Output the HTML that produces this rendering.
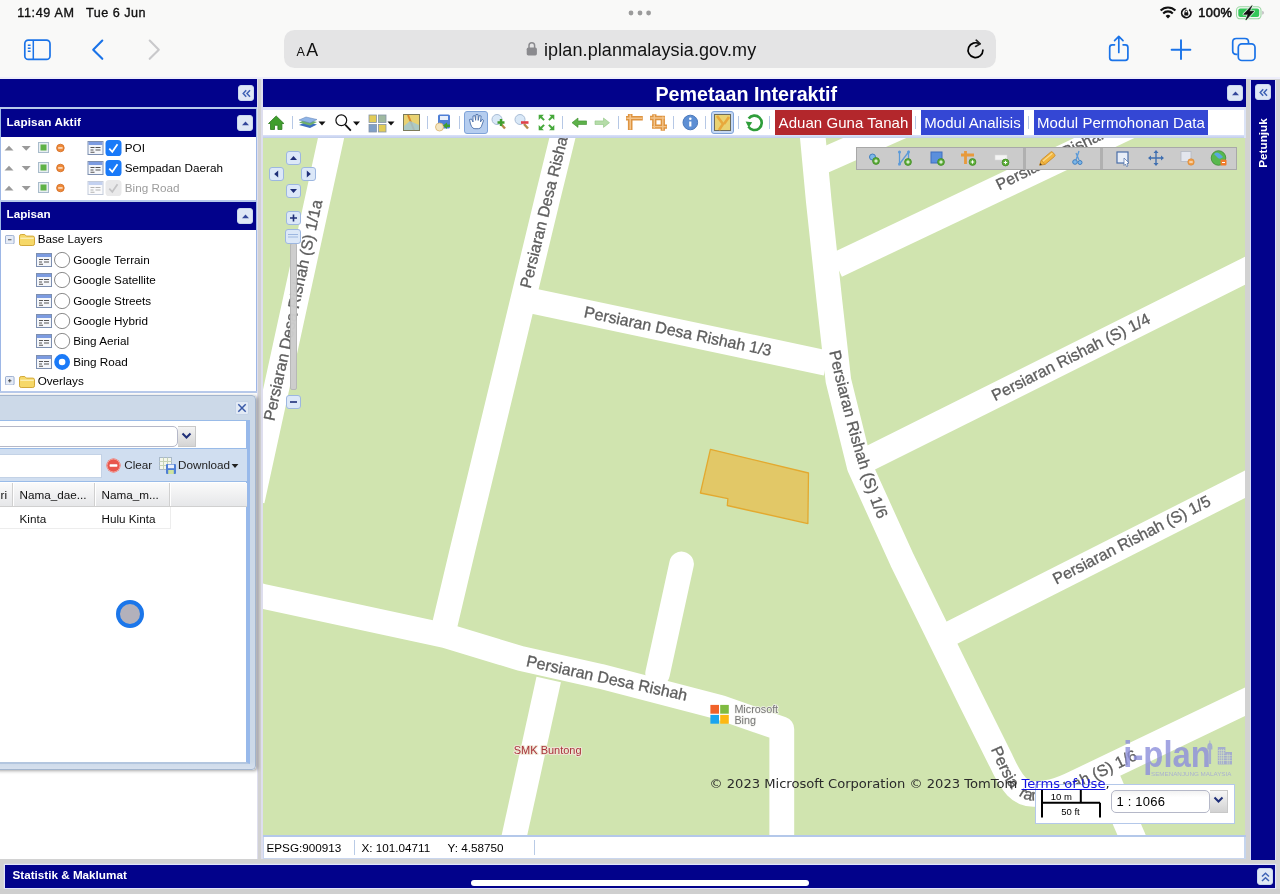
<!DOCTYPE html>
<html lang="ms">
<head>
<meta charset="utf-8">
<title>Pemetaan Interaktif</title>
<style>
*{box-sizing:border-box;margin:0;padding:0}
html,body{width:1280px;height:894px;overflow:hidden}
body{position:relative;background:#d3d3d3;font-family:"Liberation Sans",Arial,sans-serif;font-size:12px;color:#000}
.abs{position:absolute}
/* ---------- iOS chrome ---------- */
#chrome{will-change:transform;position:absolute;left:0;top:0;width:1280px;height:77px;background:#f9f9f8}
#chrome .t{position:absolute;white-space:nowrap;color:#111}
#urlbar{position:absolute;left:284px;top:30px;width:712px;height:37.6px;border-radius:10.5px;background:#e4e4e5}
/* ---------- page ---------- */
#page{will-change:transform;position:absolute;left:0;top:79px;width:1280px;height:815px;background:#d2d2d2;border-top:0}
#pagetop{position:absolute;left:0;top:76.8px;width:1280px;height:2.4px;background:#eeeefb}
.navy{background:#02028b}
.hdr{position:absolute;background:#02028b;color:#fff;font-weight:bold;white-space:nowrap}
.tool{position:absolute;width:16px;height:16px;border-radius:3px;background:#e4ecf8;border:1px solid #c3d3ea}
.row{position:absolute;white-space:nowrap;font-size:11.7px;line-height:16px;color:#000}
.cb{position:absolute;width:16px;height:16px;border-radius:3px;background:#dfe8f6;border:1px solid #c9d7ee;overflow:hidden}
.cb svg{position:absolute;left:0;top:0}
.btn{color:#fff;font-size:15px;line-height:25px;text-align:center;white-space:nowrap;letter-spacing:.05px}
</style>
</head>
<body>
<!-- ======= iOS Safari chrome ======= -->
<div id="chrome">
  <div class="t" style="left:17.3px;top:4px;font-size:12.6px;line-height:18px;letter-spacing:.62px;color:#111;-webkit-text-stroke:.35px #111">11:49 AM</div>
  <div class="t" style="left:86px;top:4px;font-size:12.6px;line-height:18px;letter-spacing:.5px;color:#111;-webkit-text-stroke:.35px #111">Tue 6 Jun</div>
  <svg class="abs" style="left:626px;top:8px" width="28" height="10"><circle cx="5" cy="5" r="2.4" fill="#9b9b9b"/><circle cx="14" cy="5" r="2.4" fill="#9b9b9b"/><circle cx="22.6" cy="5" r="2.4" fill="#9b9b9b"/></svg>
  <div id="urlbar"></div>
  <!-- sidebar icon -->
  <svg class="abs" style="left:20px;top:36px" width="34" height="28" viewBox="0 0 34 28"><rect x="4.8" y="4.2" width="25.2" height="19.2" rx="3.5" fill="none" stroke="#1a73e8" stroke-width="1.7"/><path d="M13.3 4.2v19.2M7.8 9.3h2.8M7.8 12.3h2.8M7.8 15.3h2.8" stroke="#1a73e8" stroke-width="1.5" fill="none"/></svg>
  <!-- back / forward -->
  <svg class="abs" style="left:88px;top:38px" width="20" height="24" viewBox="0 0 20 24"><path d="M14.3 2.6 5.2 11.7l9.1 9.1" fill="none" stroke="#1a73e8" stroke-width="2.1" stroke-linecap="round" stroke-linejoin="round"/></svg>
  <svg class="abs" style="left:144px;top:38px" width="20" height="24" viewBox="0 0 20 24"><path d="M5.7 2.6l9.1 9.1-9.1 9.1" fill="none" stroke="#c9c9cb" stroke-width="2.1" stroke-linecap="round" stroke-linejoin="round"/></svg>
  <!-- lock -->
  <svg class="abs" style="left:525px;top:40px" width="14" height="18" viewBox="0 0 14 18"><rect x="1.7" y="7.6" width="10.2" height="7.8" rx="1.6" fill="#8a8a8e"/><path d="M4 8V5.6a2.8 2.8 0 0 1 5.6 0V8" fill="none" stroke="#8a8a8e" stroke-width="1.5"/></svg>
  <!-- reload -->
  <svg class="abs" style="left:964px;top:38px" width="24" height="24" viewBox="0 0 24 24"><path d="M18.9 12.2a7.4 7.4 0 1 1-3.3-6.2" fill="none" stroke="#000" stroke-width="1.7" stroke-linecap="round"/><path d="M12.2 2.2l4 3.6-4.6 2.6" fill="none" stroke="#222" stroke-width="1.7" stroke-linecap="round" stroke-linejoin="round"/></svg>
  <!-- share -->
  <svg class="abs" style="left:1104px;top:32px" width="30" height="34" viewBox="0 0 30 34"><path d="M10.5 12.8H8.3q-2.6 0-2.6 2.6v10.4q0 2.6 2.6 2.6h13q2.6 0 2.6-2.6V15.4q0-2.6-2.6-2.6h-2.2" fill="none" stroke="#1a73e8" stroke-width="1.7" stroke-linecap="round"/><path d="M14.8 20.5V4.8M10.6 8.6l4.2-4.2 4.2 4.2" fill="none" stroke="#1a73e8" stroke-width="1.7" stroke-linecap="round" stroke-linejoin="round"/></svg>
  <!-- plus -->
  <svg class="abs" style="left:1168px;top:37px" width="26" height="26" viewBox="0 0 26 26"><path d="M3.6 12.7h18.8M13 3.3v18.8" stroke="#1a73e8" stroke-width="1.9" stroke-linecap="round"/></svg>
  <!-- tabs -->
  <svg class="abs" style="left:1228px;top:34px" width="32" height="30" viewBox="0 0 32 30"><rect x="10.3" y="9.8" width="16.7" height="16.7" rx="3.6" fill="#f9f9f8" stroke="#1a73e8" stroke-width="1.7"/><path d="M9.5 20.3H8.3q-3.6 0-3.6-3.6V8.1q0-3.6 3.6-3.6h8.6q3.6 0 3.6 3.6v1" fill="none" stroke="#1a73e8" stroke-width="1.7"/></svg>
  <!-- status right -->
  <svg class="abs" style="left:1158px;top:3px" width="110" height="20" viewBox="1158 3 110 20">
    <path d="M1160.6 10.5a10.5 10.5 0 0 1 14.8 0" fill="none" stroke="#111" stroke-width="2.1"/><path d="M1163.2 13.4a6.8 6.8 0 0 1 9.6 0" fill="none" stroke="#111" stroke-width="2.1"/><path d="M1165.6 16l2.4 2.5 2.4-2.5a3.4 3.4 0 0 0-4.8 0z" fill="#111"/>
    <circle cx="1186.3" cy="13" r="4.6" fill="none" stroke="#111" stroke-width="1.75" stroke-dasharray="25 4" transform="rotate(-50 1186.3 13)"/><rect x="1184.3" y="12.3" width="4" height="3.2" rx=".6" fill="#111"/><path d="M1185.1 12.5v-1a1.2 1.2 0 0 1 2.4 0v1" fill="none" stroke="#111" stroke-width=".9"/>
    <rect x="1236.5" y="6.8" width="24.5" height="12" rx="3.6" fill="none" stroke="#9bd6a2" stroke-width="1.1"/><rect x="1238.3" y="8.6" width="20.9" height="8.4" rx="2" fill="#34c759"/><path d="M1262.3 10.8v4q1.5-.6 1.5-2t-1.5-2z" fill="#b4b4b6"/>
    <path d="M1251.9 5.7l-8.2 8.6h4.4l-2.2 5.6 7.9-8.6h-4.4z" fill="#111" stroke="#ddf3e0" stroke-width="2.2" stroke-linejoin="round"/><path d="M1251.9 5.7l-8.2 8.6h4.4l-2.2 5.6 7.9-8.6h-4.4z" fill="#111" stroke="#111" stroke-width=".7" stroke-linejoin="round"/>
  </svg>
  <div class="t" style="left:1198.3px;top:4px;font-size:12.8px;line-height:18px;letter-spacing:.3px;color:#111;-webkit-text-stroke:.55px #111">100%</div>

  <div class="t" style="left:296.6px;top:41.5px;font-size:12.6px;line-height:20px;color:#111">A</div>
  <div class="t" style="left:306.2px;top:38.7px;font-size:17.8px;line-height:22px;color:#111">A</div>
  <div class="t" style="left:544px;top:38.6px;font-size:18px;line-height:22px;letter-spacing:.1px;color:#111">iplan.planmalaysia.gov.my</div>
</div>

<!-- ======= Web page ======= -->
<div id="pagetop"></div>
<div id="page">

<!-- left panel -->
<div class="abs" style="left:0;top:0;width:257px;height:780px;background:#fff"></div>
<div class="hdr" style="left:0;top:0;width:256.8px;height:28px"></div>
<div class="abs" style="left:256.8px;top:0;width:1.3px;height:780px;background:#dedeee"></div><div class="abs" style="left:261.4px;top:0;width:1.4px;height:780px;background:#dedeee"></div>
<div class="cb" style="left:238px;top:6px"><svg width="15" height="15" viewBox="0 0 15 15"><path d="M7.2 4.2 4.2 7.5l3 3.3M11 4.2 8 7.5l3 3.3" fill="none" stroke="#3f63b5" stroke-width="1.5"/></svg></div>
<div class="abs" style="left:0;top:28px;width:257px;height:2px;background:#b7c9ea"></div>
<div class="hdr" style="left:1px;top:30px;width:255px;height:28px;font-size:11.7px;line-height:26.4px;padding-left:5.5px;letter-spacing:.12px">Lapisan Aktif</div>
<div class="abs" style="left:0;top:30px;width:1px;height:92px;background:#9db7e6"></div>
<div class="abs" style="left:256px;top:30px;width:1px;height:92px;background:#9db7e6"></div>
<div class="cb" style="left:237px;top:36px"><svg width="15" height="15" viewBox="0 0 15 15"><path d="M4 9.3h7L7.5 5.4z" fill="#33479a"/></svg></div>
<svg class="abs" style="left:0;top:59.8px" width="124" height="18" viewBox="0 0 124 18">
<path d="M4.5 11.5h9L9 6.8z" fill="#9a9a9a"/><path d="M21.7 7h9l-4.5 4.7z" fill="#9a9a9a"/>
<rect x="38.5" y="3.5" width="10" height="10" fill="#e8eef2" stroke="#a9bccb"/><rect x="40.5" y="5.5" width="6" height="6" fill="#5fb246"/>
<circle cx="60.4" cy="9" r="3.8" fill="#ee8a3a"/><circle cx="60.4" cy="9" r="3.8" fill="none" stroke="#d2691e" stroke-width=".8"/><rect x="58.2" y="8.2" width="4.4" height="1.5" fill="#fde6d0"/>
<g><rect x="88" y="2.5" width="15" height="13" fill="#f4f6fa" stroke="#7d8fb0"/><rect x="88.5" y="3" width="14" height="3" fill="#7c9be0"/><path d="M90.5 8.5h4M90.5 11h3M90.5 13.2h4M95.5 8.5h5M95.5 11h5" stroke="#555" stroke-width="1.1"/></g>
<rect x="105.5" y="1" width="16" height="16" rx="3.6" fill="#1a7af8"/><path d="M109.3 9.6l3 3.2 5.2-7.6" fill="none" stroke="#fff" stroke-width="1.7"/></svg>
<div class="row" style="left:124.8px;top:61px;color:#000">POI</div>
<svg class="abs" style="left:0;top:80.2px" width="124" height="18" viewBox="0 0 124 18">
<path d="M4.5 11.5h9L9 6.8z" fill="#9a9a9a"/><path d="M21.7 7h9l-4.5 4.7z" fill="#9a9a9a"/>
<rect x="38.5" y="3.5" width="10" height="10" fill="#e8eef2" stroke="#a9bccb"/><rect x="40.5" y="5.5" width="6" height="6" fill="#5fb246"/>
<circle cx="60.4" cy="9" r="3.8" fill="#ee8a3a"/><circle cx="60.4" cy="9" r="3.8" fill="none" stroke="#d2691e" stroke-width=".8"/><rect x="58.2" y="8.2" width="4.4" height="1.5" fill="#fde6d0"/>
<g><rect x="88" y="2.5" width="15" height="13" fill="#f4f6fa" stroke="#7d8fb0"/><rect x="88.5" y="3" width="14" height="3" fill="#7c9be0"/><path d="M90.5 8.5h4M90.5 11h3M90.5 13.2h4M95.5 8.5h5M95.5 11h5" stroke="#555" stroke-width="1.1"/></g>
<rect x="105.5" y="1" width="16" height="16" rx="3.6" fill="#1a7af8"/><path d="M109.3 9.6l3 3.2 5.2-7.6" fill="none" stroke="#fff" stroke-width="1.7"/></svg>
<div class="row" style="left:124.8px;top:81px;color:#000">Sempadan Daerah</div>
<svg class="abs" style="left:0;top:100.4px" width="124" height="18" viewBox="0 0 124 18">
<path d="M4.5 11.5h9L9 6.8z" fill="#9a9a9a"/><path d="M21.7 7h9l-4.5 4.7z" fill="#9a9a9a"/>
<rect x="38.5" y="3.5" width="10" height="10" fill="#e8eef2" stroke="#a9bccb"/><rect x="40.5" y="5.5" width="6" height="6" fill="#5fb246"/>
<circle cx="60.4" cy="9" r="3.8" fill="#ee8a3a"/><circle cx="60.4" cy="9" r="3.8" fill="none" stroke="#d2691e" stroke-width=".8"/><rect x="58.2" y="8.2" width="4.4" height="1.5" fill="#fde6d0"/>
<g style="opacity:.45"><rect x="88" y="2.5" width="15" height="13" fill="#f4f6fa" stroke="#7d8fb0"/><rect x="88.5" y="3" width="14" height="3" fill="#7c9be0"/><path d="M90.5 8.5h4M90.5 11h3M90.5 13.2h4M95.5 8.5h5M95.5 11h5" stroke="#555" stroke-width="1.1"/></g>
<rect x="105.5" y="1" width="16" height="16" rx="3.6" fill="#e9e9ea"/><path d="M109.3 9.6l3 3.2 5.2-7.6" fill="none" stroke="#c3c3c5" stroke-width="1.7"/></svg>
<div class="row" style="left:124.8px;top:101px;color:#9c9c9c">Bing Road</div>

<div class="abs" style="left:0;top:120.5px;width:257px;height:2px;background:#b7c9ea"></div>
<div class="hdr" style="left:1px;top:122.5px;width:255px;height:28px;font-size:11.7px;line-height:24.6px;padding-left:5.5px">Lapisan</div>
<div class="abs" style="left:0;top:123px;width:1px;height:191px;background:#9db7e6"></div>
<div class="abs" style="left:256px;top:123px;width:1px;height:191px;background:#9db7e6"></div>
<div class="cb" style="left:237px;top:128.5px"><svg width="15" height="15" viewBox="0 0 15 15"><path d="M4 9.3h7L7.5 5.4z" fill="#33479a"/></svg></div>
<svg class="abs" style="left:5.3px;top:155.8px" width="9.5" height="9.5" viewBox="0 0 11 11"><rect x=".5" y=".5" width="10" height="10" rx="1.5" fill="#e6ecf7" stroke="#8da2c8"/><path d="M3.5 5.5h4" stroke="#333" stroke-width="1"/></svg><svg class="abs" style="left:18px;top:153px" width="18" height="15" viewBox="0 0 18 15"><path d="M1.5 4.2q0-1.7 1.7-1.7h3.6l1.6 1.6h6.4q1.7 0 1.7 1.7v6q0 1.7-1.7 1.7H3.2q-1.7 0-1.7-1.7z" fill="#f6d868" stroke="#d3a93a"/><path d="M2.3 6.3h13.4" stroke="#fbeeb0" stroke-width="1.4"/></svg><div class="row" style="left:37.7px;top:152.4px">Base Layers</div>
<svg class="abs" style="left:35px;top:172.0px" width="36" height="18" viewBox="0 0 36 18"><rect x="1.5" y="2.5" width="15" height="13" fill="#f4f6fa" stroke="#7d8fb0"/><rect x="2" y="3" width="14" height="3" fill="#7c9be0"/><path d="M4 8.5h4M4 11h3M4 13.2h4M9 8.5h5M9 11h5" stroke="#555" stroke-width="1.1"/><circle cx="27.1" cy="9" r="7.6" fill="#fff" stroke="#8a8a8a" stroke-width="1"/></svg>
<div class="row" style="left:73.2px;top:173px">Google Terrain</div>
<svg class="abs" style="left:35px;top:192.2px" width="36" height="18" viewBox="0 0 36 18"><rect x="1.5" y="2.5" width="15" height="13" fill="#f4f6fa" stroke="#7d8fb0"/><rect x="2" y="3" width="14" height="3" fill="#7c9be0"/><path d="M4 8.5h4M4 11h3M4 13.2h4M9 8.5h5M9 11h5" stroke="#555" stroke-width="1.1"/><circle cx="27.1" cy="9" r="7.6" fill="#fff" stroke="#8a8a8a" stroke-width="1"/></svg>
<div class="row" style="left:73.2px;top:193px">Google Satellite</div>
<svg class="abs" style="left:35px;top:212.6px" width="36" height="18" viewBox="0 0 36 18"><rect x="1.5" y="2.5" width="15" height="13" fill="#f4f6fa" stroke="#7d8fb0"/><rect x="2" y="3" width="14" height="3" fill="#7c9be0"/><path d="M4 8.5h4M4 11h3M4 13.2h4M9 8.5h5M9 11h5" stroke="#555" stroke-width="1.1"/><circle cx="27.1" cy="9" r="7.6" fill="#fff" stroke="#8a8a8a" stroke-width="1"/></svg>
<div class="row" style="left:73.2px;top:214px">Google Streets</div>
<svg class="abs" style="left:35px;top:232.9px" width="36" height="18" viewBox="0 0 36 18"><rect x="1.5" y="2.5" width="15" height="13" fill="#f4f6fa" stroke="#7d8fb0"/><rect x="2" y="3" width="14" height="3" fill="#7c9be0"/><path d="M4 8.5h4M4 11h3M4 13.2h4M9 8.5h5M9 11h5" stroke="#555" stroke-width="1.1"/><circle cx="27.1" cy="9" r="7.6" fill="#fff" stroke="#8a8a8a" stroke-width="1"/></svg>
<div class="row" style="left:73.2px;top:234px">Google Hybrid</div>
<svg class="abs" style="left:35px;top:253.3px" width="36" height="18" viewBox="0 0 36 18"><rect x="1.5" y="2.5" width="15" height="13" fill="#f4f6fa" stroke="#7d8fb0"/><rect x="2" y="3" width="14" height="3" fill="#7c9be0"/><path d="M4 8.5h4M4 11h3M4 13.2h4M9 8.5h5M9 11h5" stroke="#555" stroke-width="1.1"/><circle cx="27.1" cy="9" r="7.6" fill="#fff" stroke="#8a8a8a" stroke-width="1"/></svg>
<div class="row" style="left:73.2px;top:254px">Bing Aerial</div>
<svg class="abs" style="left:35px;top:273.7px" width="36" height="18" viewBox="0 0 36 18"><rect x="1.5" y="2.5" width="15" height="13" fill="#f4f6fa" stroke="#7d8fb0"/><rect x="2" y="3" width="14" height="3" fill="#7c9be0"/><path d="M4 8.5h4M4 11h3M4 13.2h4M9 8.5h5M9 11h5" stroke="#555" stroke-width="1.1"/><circle cx="27.1" cy="9" r="7.4" fill="#fff" stroke="#1a7af8" stroke-width="0"/><circle cx="27.1" cy="9" r="5.6" fill="none" stroke="#1a7af8" stroke-width="4.6"/></svg>
<div class="row" style="left:73.2px;top:275px">Bing Road</div>
<svg class="abs" style="left:5.3px;top:296.8px" width="9.5" height="9.5" viewBox="0 0 11 11"><rect x=".5" y=".5" width="10" height="10" rx="1.5" fill="#e6ecf7" stroke="#8da2c8"/><path d="M3.5 5.5h4" stroke="#333" stroke-width="1"/><path d="M5.5 3.5v4" stroke="#333" stroke-width="1"/></svg><svg class="abs" style="left:18px;top:295px" width="18" height="15" viewBox="0 0 18 15"><path d="M1.5 4.2q0-1.7 1.7-1.7h3.6l1.6 1.6h6.4q1.7 0 1.7 1.7v6q0 1.7-1.7 1.7H3.2q-1.7 0-1.7-1.7z" fill="#f6d868" stroke="#d3a93a"/><path d="M2.3 6.3h13.4" stroke="#fbeeb0" stroke-width="1.4"/></svg><div class="row" style="left:37.7px;top:293.6px">Overlays</div>

<div class="abs" style="left:0;top:312px;width:257px;height:2px;background:#b7c9ea"></div>
<svg class="abs" style="left:262.6px;top:58.5px;background:#d0e4af" width="982.9" height="697.5" viewBox="262.6 137.5 982.9 697.5" font-family="'Liberation Sans',Arial,sans-serif">
<defs><path id="lp6" d="M828.7 351 Q856.3 470.5 877.5 518"/><path id="lp9" d="M984.9 736.5 L998.4 767 C1009 790.5 1020 800 1033 800 S1058 797 1077.4 788 L1180 738"/></defs>
<path d="M334.5 120 L330.1 140 L251.5 500" fill="none" stroke="#fff" stroke-width="25.6" stroke-linecap="butt" stroke-linejoin="round"/>
<path d="M566.3 120 L546.6 200 L479 480 L462 550 L443 630" fill="none" stroke="#fff" stroke-width="25.4" stroke-linecap="butt" stroke-linejoin="round"/>
<path d="M534 300.8 L826 362.6" fill="none" stroke="#fff" stroke-width="25.4" stroke-linecap="butt" stroke-linejoin="round"/>
<path d="M809.5 110 L812.5 138 L818.3 200 L829 300 L838 380 L859.3 466 L901.9 560 L970.6 700 L1000.5 760 C1012 785 1020 793.5 1033 793.5 S1056 792 1075 782.6 L1260 693.8" fill="none" stroke="#fff" stroke-width="25.6" stroke-linecap="butt" stroke-linejoin="round"/>
<path d="M820 161.5 L930 112.8" fill="none" stroke="#fff" stroke-width="25.6" stroke-linecap="butt" stroke-linejoin="round"/>
<path d="M836 264.7 L1150 115.6" fill="none" stroke="#fff" stroke-width="25.8" stroke-linecap="butt" stroke-linejoin="round"/>
<path d="M860 462.4 L1260 262.6" fill="none" stroke="#fff" stroke-width="25" stroke-linecap="butt" stroke-linejoin="round"/>
<path d="M941 637.5 L1260 476" fill="none" stroke="#fff" stroke-width="24.6" stroke-linecap="butt" stroke-linejoin="round"/>
<path d="M1100 762 L1143 862" fill="none" stroke="#fff" stroke-width="26" stroke-linecap="butt" stroke-linejoin="round"/>
<path d="M250 593 L262.4 595.75 L445 635.2 L520 657.8 L600 675.8 L720 707 L781.4 728.4 L781.4 850" fill="none" stroke="#fff" stroke-width="24.8" stroke-linecap="butt" stroke-linejoin="round"/>
<path d="M657.2 673 L681.2 563.4" fill="none" stroke="#fff" stroke-width="24.6" stroke-linecap="round" stroke-linejoin="round"/>
<path d="M548.3 679 L510 853" fill="none" stroke="#fff" stroke-width="25" stroke-linecap="butt" stroke-linejoin="round"/>
<polygon points="710,448.8 808.1,472.5 807.5,523.1 726.9,505 727.5,498.1 700,492.5" fill="#e2c867" stroke="#e3a92f" stroke-width="1.3" stroke-linejoin="round"/>
<g fill="#5e5e5e" stroke="#5e5e5e" stroke-width=".3" font-size="16">
<text transform="translate(273.8,421) rotate(-77.7)">Persiaran Desa Rishah (S) 1/1a</text>
<text transform="translate(530.2,288.6) rotate(-76.2)">Persiaran Desa Rishah</text>
<text transform="translate(582.9,316.6) rotate(11.8)">Persiaran Desa Rishah 1/3</text>
<text><textPath href="#lp6">Persiaran Rishah (S) 1/6</textPath></text>
<text transform="translate(994.6,400.7) rotate(-26.7)">Persiaran Rishah (S) 1/4</text>
<text transform="translate(1055.8,584.3) rotate(-27.2)">Persiaran Rishah (S) 1/5</text>
<text transform="translate(998.8,190) rotate(-26.3)">Persiaran Rishah</text>
<text transform="translate(525,665.6) rotate(12.2)">Persiaran Desa Rishah</text>
<text><textPath href="#lp9" startOffset="13.5">Persia<tspan dx="9">ran Rishah (S) 1/6</tspan></textPath></text>
</g>
<text x="513.4" y="754" font-size="11" fill="#a8323a" stroke="#efe6d6" stroke-width="2.2" paint-order="stroke" stroke-linejoin="round">SMK Buntong</text>
<rect x="710" y="704.4" width="8.6" height="8.8" fill="#f1622a"/><rect x="719.8" y="704.4" width="8.6" height="8.8" fill="#80bb41"/><rect x="710" y="714.4" width="8.6" height="8.8" fill="#1ba4ef"/><rect x="719.8" y="714.4" width="8.6" height="8.8" fill="#fdb813"/>
<g font-size="10.8" fill="#767676" stroke="#f3f3ee" stroke-width="1.4" paint-order="stroke"><text x="734" y="712.8">Microsoft</text><text x="734" y="724">Bing</text></g>
</svg>
<div class="hdr" style="left:262.8px;top:0;width:983.2px;height:28px;font-size:19.7px;line-height:31px"><span class="abs" style="left:392.7px;top:0">Pemetaan Interaktif</span></div>
<div class="cb" style="left:1227px;top:6px"><svg width="15" height="15" viewBox="0 0 15 15"><path d="M4 9.3h7L7.5 5.4z" fill="#33479a"/></svg></div>
<div class="abs" style="left:262.8px;top:28px;width:983.2px;height:30.7px;background:linear-gradient(#e0e4fb 0,#e0e4fb 2.6px,#fff 2.8px,#fff 27.6px,#dde3fa 27.8px,#c3cfec 30.7px);border-right:2px solid #dbe3f6"></div>
<div class="abs" style="left:291.5px;top:36.5px;width:1.3px;height:13.5px;background:#b6c8e5"></div>
<div class="abs" style="left:426.5px;top:36.5px;width:1.3px;height:13.5px;background:#b6c8e5"></div>
<div class="abs" style="left:458.9px;top:36.5px;width:1.3px;height:13.5px;background:#b6c8e5"></div>
<div class="abs" style="left:561.9px;top:36.5px;width:1.3px;height:13.5px;background:#b6c8e5"></div>
<div class="abs" style="left:617.5px;top:36.5px;width:1.3px;height:13.5px;background:#b6c8e5"></div>
<div class="abs" style="left:673px;top:36.5px;width:1.3px;height:13.5px;background:#b6c8e5"></div>
<div class="abs" style="left:704.9px;top:36.5px;width:1.3px;height:13.5px;background:#b6c8e5"></div>
<div class="abs" style="left:737.5px;top:36.5px;width:1.3px;height:13.5px;background:#b6c8e5"></div>
<div class="abs" style="left:769px;top:36.5px;width:1.3px;height:13.5px;background:#b6c8e5"></div>
<div class="abs" style="left:915px;top:36.5px;width:1.3px;height:13.5px;background:#b6c8e5"></div>
<div class="abs" style="left:1028px;top:36.5px;width:1.3px;height:13.5px;background:#b6c8e5"></div>
<div class="abs" style="left:464px;top:32px;width:24px;height:23px;border-radius:3px;background:#b5cdef;border:1px solid #7fa3d9"></div>
<div class="abs" style="left:711px;top:32px;width:23px;height:23px;border-radius:3px;background:#c5d8f3;border:1px solid #7fa3d9"></div>
<svg class="abs" style="left:263px;top:28px" width="520" height="30" viewBox="263 107 520 30"><path d="M268.5 123.5l7.7-7.5 7.7 7.5h-2v6h-4v-4.2h-3.4v4.2h-4v-6z" fill="#3f9e2d" stroke="#2b7a1e" stroke-width=".8"/><path d="M299 125l7-3 11 2.5-7 3.5z" fill="#3d6fc0"/><path d="M299 122.5l7-3 11 2.5-7 3.5z" fill="#6fb06a"/><path d="M299 120l7-3 11 2.5-7 3.5z" fill="#8fb4e6" stroke="#5c7fb5" stroke-width=".5"/><path d="M318.5 121.5h7l-3.5 4z" fill="#111"/><circle cx="341.3" cy="120.3" r="5.4" fill="#fff" stroke="#111" stroke-width="1.2"/><path d="M345.2 124.6l5.6 6" stroke="#111" stroke-width="1.7"/><path d="M353 121.5h7l-3.5 4z" fill="#111"/><rect x="369" y="115" width="7.5" height="7.5" fill="#e2cc57" stroke="#8494a8" stroke-width=".8"/><rect x="378.5" y="115" width="7.5" height="7.5" fill="#9fb9a0" stroke="#8494a8" stroke-width=".8"/><rect x="369" y="124.5" width="7.5" height="7.5" fill="#7f9fc6" stroke="#8494a8" stroke-width=".8"/><rect x="378.5" y="124.5" width="7.5" height="7.5" fill="#e2cc57" stroke="#8494a8" stroke-width=".8"/><path d="M387.5 121.5h7l-3.5 4z" fill="#111"/><rect x="403.5" y="114.5" width="16" height="16" fill="#e9d271" stroke="#7b7b5b" stroke-width="1"/><path d="M408 115l6 15" stroke="#d98a2b" stroke-width="2"/><path d="M404 126l6-5 9 4v5h-15z" fill="#9cc7d9" opacity=".8"/><rect x="438" y="114.5" width="12" height="14" rx="1.5" fill="#4f7fd6"/><rect x="440" y="116" width="8" height="4" fill="#e8effb"/><circle cx="439.5" cy="127" r="4" fill="#f3e5c2" stroke="#d9b36a" stroke-width=".8"/><path d="M443 125.5l4-3v2h3v2.4h-3v2z" fill="#3f9e2d"/><path d="M470.5 124l-1-4.5 2-.5 1.5 3V116l2-.3.6 4.6.4-5.8 2 .1.2 5.8 1-4.8 1.9.4-.6 6 1.5-2.6 1.6 1-2.3 6.3q-.8 2-3 2h-3.4q-2.2 0-3.2-2z" fill="#fff" stroke="#4a6ea8" stroke-width=".9" stroke-linejoin="round"/><circle cx="497" cy="119.5" r="5" fill="#d9e8f7" stroke="#a9bdd6" stroke-width="1"/><path d="M501 124l4 4.5" stroke="#b58a4a" stroke-width="2.4"/><path d="M497.5 122.5h7M501 119v7" stroke="#3f9e2d" stroke-width="2.4"/><circle cx="520" cy="119.5" r="5" fill="#d9e8f7" stroke="#a9bdd6" stroke-width="1"/><path d="M524 124l4 4.5" stroke="#b58a4a" stroke-width="2.4"/><path d="M521 122.5h7.5" stroke="#e0414a" stroke-width="2.6"/><path d="M538.7 114.7L543.9 114.7L538.7 119.9z" fill="#45a83a"/><path d="M540.2 116.2L544.1 120.1" stroke="#45a83a" stroke-width="2"/><path d="M554.3 114.7L549.1 114.7L554.3 119.9z" fill="#45a83a"/><path d="M552.8 116.2L548.9 120.1" stroke="#45a83a" stroke-width="2"/><path d="M538.7 130.3L543.9 130.3L538.7 125.1z" fill="#45a83a"/><path d="M540.2 128.8L544.1 124.9" stroke="#45a83a" stroke-width="2"/><path d="M554.3 130.3L549.1 130.3L554.3 125.1z" fill="#45a83a"/><path d="M552.8 128.8L548.9 124.9" stroke="#45a83a" stroke-width="2"/><path d="M572 122.7l6-4.7v2.9h8.5v3.6h-8.5v2.9z" fill="#5db14a" stroke="#3c8f2e" stroke-width=".6"/><path d="M609.5 122.7l-6-4.7v2.9h-8.5v3.6h8.5v2.9z" fill="#b5dca8" stroke="#8fc583" stroke-width=".6"/><path d="M626 118.2h16.8M630.2 114v16" stroke="#de9440" stroke-width="4.6" fill="none"/><path d="M626.5 118.2h15.8M630.2 114.5v15" stroke="#f3c48a" stroke-width="1.6" fill="none"/><path d="M650 118h14.8M654.3 114.3v14.3M662.8 116v14.8M652 126.6h15" stroke="#de9440" stroke-width="4.3" fill="none"/><path d="M650.5 118h14M654.3 114.8v13.3M662.8 116.5v13.8M652.5 126.6h14" stroke="#f3c48a" stroke-width="1.4" fill="none"/><circle cx="690.3" cy="122.5" r="7.3" fill="#5d8fd4" stroke="#4a78ba" stroke-width="1"/><path d="M690.3 121.5v5" stroke="#fff" stroke-width="2.2"/><circle cx="690.3" cy="118.8" r="1.3" fill="#fff"/><rect x="714.5" y="114.5" width="16" height="16" fill="#e9d271" stroke="#6b6b5b" stroke-width="1"/><path d="M717 116l6 8-4 6" stroke="#e8a83c" stroke-width="2.6" fill="none"/><path d="M729 117l-5 7" stroke="#e8a83c" stroke-width="2.6"/><path d="M748.4 126.6a7.2 7.2 0 1 0 .3-8" fill="none" stroke="#2f9e3a" stroke-width="2.6"/><path d="M745.6 121.6l6.6.6-3.5 5.4z" fill="#2f9e3a"/></svg>
<div class="abs btn" style="left:775px;top:31px;width:137px;height:25px;background:#b3272c">Aduan Guna Tanah</div>
<div class="abs btn" style="left:921px;top:31px;width:103px;height:25px;background:#3447d4">Modul Analisis</div>
<div class="abs btn" style="left:1034px;top:31px;width:174px;height:25px;background:#3447d4">Modul Permohonan Data</div>
<svg class="abs" style="left:286px;top:72px" width="15" height="14" viewBox="0 0 15 14"><rect x=".5" y=".5" width="14" height="13" rx="2.5" fill="#dce8f8" stroke="#9db7e0"/><path d="M4 9h7L7.5 5z" fill="#1f2f78"/></svg>
<svg class="abs" style="left:269px;top:87.5px" width="15" height="14" viewBox="0 0 15 14"><rect x=".5" y=".5" width="14" height="13" rx="2.5" fill="#dce8f8" stroke="#9db7e0"/><path d="M9.2 3.5v7L5.2 7z" fill="#1f2f78"/></svg>
<svg class="abs" style="left:301px;top:87.5px" width="15" height="14" viewBox="0 0 15 14"><rect x=".5" y=".5" width="14" height="13" rx="2.5" fill="#dce8f8" stroke="#9db7e0"/><path d="M5.8 3.5v7l4-3.5z" fill="#1f2f78"/></svg>
<svg class="abs" style="left:286px;top:104.5px" width="15" height="14" viewBox="0 0 15 14"><rect x=".5" y=".5" width="14" height="13" rx="2.5" fill="#dce8f8" stroke="#9db7e0"/><path d="M4 5h7L7.5 9z" fill="#1f2f78"/></svg>
<svg class="abs" style="left:286px;top:132px" width="15" height="14" viewBox="0 0 15 14"><rect x=".5" y=".5" width="14" height="13" rx="2.5" fill="#dce8f8" stroke="#9db7e0"/><path d="M4 7h7M7.5 3.5v7" stroke="#1f2f78" stroke-width="1.6"/></svg>
<div class="abs" style="left:289.6px;top:164px;width:7px;height:147px;background:#cdcdcd;border:1px solid #b7b7b7;border-radius:2px;opacity:.97"></div>
<svg class="abs" style="left:285px;top:150px" width="16" height="15" viewBox="0 0 16 15"><rect x=".5" y=".5" width="15" height="14" rx="2.5" fill="#dce8f8" stroke="#9db7e0"/><path d="M3 5.5h10M3 8h10" stroke="#9db7e0" stroke-width="1.2"/></svg>
<svg class="abs" style="left:286px;top:315.5px" width="15" height="14" viewBox="0 0 15 14"><rect x=".5" y=".5" width="14" height="13" rx="2.5" fill="#dce8f8" stroke="#9db7e0"/><path d="M4 7h7" stroke="#1f2f78" stroke-width="1.6"/></svg>
<div class="abs" style="left:855.5px;top:68px;width:381px;height:23px;background:#cbcbcb;border:1px solid #a8a8a8"></div>
<div class="abs" style="left:1023px;top:69px;width:3px;height:21px;background:#b0b0b0"></div><div class="abs" style="left:1100px;top:69px;width:3px;height:21px;background:#b0b0b0"></div>
<svg class="abs" style="left:856px;top:68px" width="381" height="23" viewBox="856 147 381 23"><circle cx="872.5" cy="157" r="3" fill="#7db7e8" stroke="#3f7fc0" stroke-width="1"/><circle cx="876" cy="161" r="3.4" fill="#5fae3a" stroke="#3d8a22" stroke-width=".8"/><path d="M874.3 161h3.4M876 159.3v3.4" stroke="#fff" stroke-width="1"/><path d="M899.5 152v12l9-12v12" fill="none" stroke="#5b9ad8" stroke-width="1.3"/><circle cx="899.5" cy="152" r="1.5" fill="#5b9ad8"/><circle cx="908.5" cy="152" r="1.5" fill="#5b9ad8"/><circle cx="899.5" cy="164" r="1.5" fill="#5b9ad8"/><circle cx="908" cy="162" r="3.4" fill="#5fae3a" stroke="#3d8a22" stroke-width=".8"/><path d="M906.3 162h3.4M908 160.3v3.4" stroke="#fff" stroke-width="1"/><rect x="931" y="152" width="11" height="11" fill="#5b8fdc" stroke="#3f6fc0" stroke-width="1"/><circle cx="941" cy="162" r="3.4" fill="#5fae3a" stroke="#3d8a22" stroke-width=".8"/><path d="M939.3 162h3.4M941 160.3v3.4" stroke="#fff" stroke-width="1"/><path d="M961 155h13M965.5 151v13" stroke="#e89a3c" stroke-width="2.8"/><circle cx="972.5" cy="162" r="3.4" fill="#5fae3a" stroke="#3d8a22" stroke-width=".8"/><path d="M970.8 162h3.4M972.5 160.3v3.4" stroke="#fff" stroke-width="1"/><rect x="995" y="155" width="12" height="5" fill="#f4f4f4" stroke="#d9d9d9" stroke-width=".6"/><circle cx="1005.5" cy="162.5" r="3.4" fill="#5fae3a" stroke="#3d8a22" stroke-width=".8"/><path d="M1003.8 162.5h3.4M1005.5 160.8v3.4" stroke="#fff" stroke-width="1"/><g transform="translate(1039.6,165.2) rotate(-40)"><path d="M0 0l4.6-2.9h12.4q1.4 0 1.4 1.4v3q0 1.4-1.4 1.4H4.6z" fill="#f2b63f" stroke="#c98a2a" stroke-width=".8"/><path d="M4.6-2.9v5.8" stroke="#c98a2a" stroke-width=".6"/><path d="M0 0l2-1.3v2.6z" fill="#4a3a2a"/><path d="M5 -.9h12.5" stroke="#f9dc8f" stroke-width="1.2"/></g><path d="M1079 151l-3 9M1076 153l3 7" stroke="#5b9ad8" stroke-width="1.3"/><circle cx="1075" cy="162" r="2.3" fill="#7db7e8" stroke="#3f7fc0"/><circle cx="1080" cy="162.5" r="2" fill="#7db7e8" stroke="#3f7fc0"/><rect x="1117" y="152" width="11" height="11" fill="#e8eef8" stroke="#4a6ea8" stroke-width="1.2"/><path d="M1124 158l5 5-2 .5 1 2.5-1.5.5-1-2.5-1.5 1.5z" fill="#fff" stroke="#4a6ea8" stroke-width=".7"/><path d="M1149.5 158h13M1156 151.5v13" stroke="#3f6fb0" stroke-width="1.4"/><path d="M1156 150l2.5 3h-5zM1156 166l2.5-3h-5zM1148 158l3-2.5v5zM1164 158l-3-2.5v5z" fill="#3f6fb0"/><rect x="1181" y="151.5" width="10" height="10" fill="#e3e6ee" stroke="#b4b8c4" stroke-width=".8"/><circle cx="1191" cy="162" r="3.2" fill="#f0a04a" stroke="#d9822a" stroke-width=".6"/><path d="M1189.3 162h3.4" stroke="#fff" stroke-width="1"/><circle cx="1218.5" cy="158" r="7.3" fill="#58b84e" stroke="#3d8a32" stroke-width=".8"/><path d="M1214 154q3-3 6 0t3 3q-3 3-5 1t-4-4z" fill="#5aa6e0"/><rect x="1220.5" y="159.5" width="6" height="6" rx="1" fill="#f07a2a"/><path d="M1222 162.5h3" stroke="#fff" stroke-width="1"/></svg>
<svg class="abs" style="left:1118px;top:655px" width="120" height="46" viewBox="1118 734 120 46" font-family="'Liberation Sans',Arial,sans-serif" opacity=".8">
<text x="1123.3" y="767.2" font-size="37" font-weight="bold" fill="#8d8fdc" textLength="87.5" lengthAdjust="spacingAndGlyphs">i-plan</text>
<g fill="#9aa0d6"><path d="M1208.6 764v-14.5h-1.3v-3.2q0-3 2.1-3.6v-2.3h.9v2.3q2.1.6 2.1 3.6v3.2h-1.3v14.5z"/><path d="M1217.8 764.5v-17.5h7.6v5h6.6v12.5z"/></g>
<path d="M1219.7 749v15M1221.6 749v15M1223.5 749v15M1227.3 753.5v11M1229.2 753.5v11M1217.8 750.5h7.6M1217.8 753h7.6M1217.8 755.5h14M1217.8 758h14M1217.8 760.5h14" stroke="#d7e4c4" stroke-width=".6" fill="none"/>
<text x="1151" y="775.6" font-size="6.2" fill="#a0a5d8" textLength="80.4" lengthAdjust="spacingAndGlyphs">SEMENANJUNG MALAYSIA</text>
</svg>
<div class="abs" style="left:1034.5px;top:705px;width:200.5px;height:39.5px;background:#fff;border:1px solid #b4c8ea"></div>
<svg class="abs" style="left:1036px;top:708px" width="72" height="34" viewBox="1036 787 72 34" font-family="'Liberation Sans',Arial,sans-serif">
<path d="M1042 790v27.5M1042 802.8h58M1080.8 790v12.8M1100 802.8v14.7" fill="none" stroke="#000" stroke-width="2"/>
<text x="1061.3" y="800" font-size="9.5" text-anchor="middle">10 m</text><text x="1070.5" y="814.8" font-size="9.5" text-anchor="middle">50 ft</text></svg>
<div class="abs" style="left:1111px;top:711px;width:99px;height:23px;background:linear-gradient(#f2f2f2,#fff 30%);border:1px solid #b5b8c8;border-radius:5px;font-size:13px;line-height:21px;padding-left:4.5px;letter-spacing:.2px">1 : 1066</div>
<div class="abs" style="left:1210px;top:711px;width:18px;height:23px;background:linear-gradient(#f6f6f6,#d2d2d2);border:1px solid #c8c8c8;border-left:0"></div>
<svg class="abs" style="left:1212px;top:716px" width="13" height="10" viewBox="0 0 13 10"><path d="M2.5 2.5l4 4 4-4" fill="none" stroke="#1f2f78" stroke-width="2"/></svg>
<div class="abs" style="left:262.8px;top:756px;width:983.2px;height:2px;background:#b4c8ea"></div>
<div class="abs" style="left:262.8px;top:758px;width:983.2px;height:22px;background:#fff;border-right:2px solid #c5d5ee;border-bottom:1.5px solid #c9d6ee;border-left:1px solid #c9d6ee"></div>
<div class="row" style="left:266.5px;top:761px;font-size:11.7px">EPSG:900913</div><div class="row" style="left:361.5px;top:761px;font-size:11.7px">X: 101.04711</div><div class="row" style="left:447.5px;top:761px;font-size:11.7px">Y: 4.58750</div>
<div class="abs" style="left:534px;top:761px;width:1px;height:15px;background:#b9cbe6"></div><div class="abs" style="left:354px;top:761px;width:1px;height:15px;background:#b9cbe6"></div>
<div class="abs navy" style="left:1250px;top:0.5px;width:25.6px;height:780px;border-left:1px solid #d4d9fb;border-right:1px solid #e2e5fd"></div>
<div class="abs" style="left:1275.6px;top:0;width:5px;height:815px;background:#d5d5d5"></div>
<div class="cb" style="left:1254.5px;top:5px"><svg width="15" height="15" viewBox="0 0 15 15"><path d="M7.2 4.2 4.2 7.5l3 3.3M11 4.2 8 7.5l3 3.3" fill="none" stroke="#3f63b5" stroke-width="1.5"/></svg></div>
<div class="abs" style="left:1212.5px;top:56px;width:100px;height:16px;line-height:16px;text-align:center;transform:rotate(-90deg);color:#fff;font-weight:bold;font-size:11.7px">Petunjuk</div>
<div class="hdr" style="left:5.2px;top:786.1px;width:1269.6px;height:22.9px;box-shadow:0 0 0 1.2px #e1e3fb;font-size:11.7px;line-height:19.6px;padding-left:7.3px">Statistik &amp; Maklumat</div>
<div class="cb" style="left:1256.5px;top:788.5px;height:17px"><svg width="15" height="16" viewBox="0 0 15 16"><path d="M4 7.5 7.5 4.3 11 7.5M4 12 7.5 8.8 11 12" fill="none" stroke="#3f63b5" stroke-width="1.5"/></svg></div>
<div class="abs" style="left:0;top:810px;width:1280px;height:5px;background:#cfcfcf"></div>
<div class="abs" style="left:471px;top:801px;width:337.5px;height:5.5px;border-radius:3px;background:#fff"></div>

<div class="abs" style="left:709.5px;top:695.6px;font-family:'DejaVu Sans',Verdana,sans-serif;font-size:13.1px;line-height:17px;white-space:nowrap;color:#2b2b2b">© 2023 Microsoft Corporation © 2023 TomTom <span style="color:#1414e0;text-decoration:underline">Terms of Use</span>,</div>
<!-- floating result window (page coords: top = y-79) -->
<div class="abs" style="left:-4px;top:315.8px;width:259.8px;height:375.2px;background:linear-gradient(#ccd9e8 98%,#d6e0ee);border:1px solid #a3b5cd;border-radius:0 4px 4px 0;box-shadow:1.5px 1px 3.5px rgba(0,0,0,.35)"></div>
<div class="abs" style="left:235px;top:322px;width:14px;height:14px;border-radius:2px;background:#e2eaf5;border:1px solid #c5d3e6"></div>
<svg class="abs" style="left:235px;top:322px" width="14" height="14" viewBox="0 0 14 14"><path d="M3.3 3.3l7.4 7.4M10.7 3.3l-7.4 7.4" stroke="#3a5aa8" stroke-width="1.5"/></svg>
<div class="abs" style="left:-2px;top:341px;width:251.8px;height:343.5px;background:#fff;border:1px solid #99bbe8;border-right:4px solid #98b9ea;border-bottom:2px solid #b3c6df"></div>
<!-- combo -->
<div class="abs" style="left:-6px;top:347px;width:184px;height:21px;background:#fff;border:1px solid #b5b8c8;border-radius:5px"></div>
<div class="abs" style="left:178px;top:347px;width:18px;height:21px;background:linear-gradient(#f4f4f4,#d4d4d4);border:1px solid #c8c8c8;border-left:0"></div>
<svg class="abs" style="left:180px;top:352px" width="13" height="10" viewBox="0 0 13 10"><path d="M2.5 2.5l4 4 4-4" fill="none" stroke="#1f2f78" stroke-width="2"/></svg>
<!-- toolbar -->
<div class="abs" style="left:-1px;top:369px;width:248px;height:1px;background:#99bbe8"></div>
<div class="abs" style="left:-1px;top:370px;width:248px;height:33px;background:#d0def0"></div>
<div class="abs" style="left:-1px;top:402px;width:248px;height:1px;background:#99bbe8"></div>
<div class="abs" style="left:-4px;top:375px;width:106px;height:24px;background:#fff;border:1px solid #c3d2e6"></div>
<svg class="abs" style="left:105px;top:378px" width="17" height="17" viewBox="0 0 17 17"><circle cx="8.5" cy="8.5" r="7" fill="#e8564d"/><circle cx="8.5" cy="8.5" r="6.5" fill="none" stroke="#f3a39d" stroke-width="1"/><rect x="4.6" y="7.3" width="7.8" height="2.4" rx=".6" fill="#fff"/></svg>
<div class="row" style="left:124.2px;top:378px;color:#222">Clear</div>
<svg class="abs" style="left:158px;top:377px" width="19" height="19" viewBox="0 0 19 19"><rect x="1.5" y="1.5" width="12" height="12" fill="#f3f6ec" stroke="#a9b9c9"/><path d="M1.5 5.5h12M5.5 1.5v12M9.5 1.5v12M1.5 9.5h12" stroke="#c5d3b5" stroke-width="1"/><rect x="8" y="8" width="10" height="10" rx="1" fill="#4f7fd6"/><rect x="10" y="8.6" width="6" height="3.6" fill="#e9f0fb"/><rect x="10.2" y="14" width="5.6" height="4" fill="#cfe3a0"/></svg>
<div class="row" style="left:178px;top:378px;color:#222">Download</div>
<svg class="abs" style="left:231px;top:384px" width="8" height="6" viewBox="0 0 8 6"><path d="M.6 1h6.8L4 5z" fill="#222"/></svg>
<!-- grid -->
<div class="abs" style="left:-1px;top:404px;width:248px;height:24px;background:linear-gradient(#fafafa,#e6e7e9);border-bottom:1px solid #d0d0d0"></div>
<div class="abs" style="left:12px;top:404px;width:1px;height:23px;background:#d0d0d0"></div>
<div class="abs" style="left:13px;top:404px;width:1px;height:23px;background:#fff"></div>
<div class="abs" style="left:94px;top:404px;width:1px;height:23px;background:#d0d0d0"></div>
<div class="abs" style="left:95px;top:404px;width:1px;height:23px;background:#fff"></div>
<div class="abs" style="left:169px;top:404px;width:1px;height:23px;background:#d0d0d0"></div>
<div class="abs" style="left:170px;top:404px;width:1px;height:23px;background:#fff"></div>
<div class="row" style="left:0.5px;top:408px;color:#111">ri</div>
<div class="row" style="left:19.5px;top:408px;color:#111">Nama_dae...</div>
<div class="row" style="left:101.5px;top:408px;color:#111">Nama_m...</div>
<div class="abs" style="left:-1px;top:449px;width:172px;height:1px;background:#ededed"></div>
<div class="abs" style="left:170px;top:428px;width:1px;height:22px;background:#ededed"></div>
<div class="row" style="left:19.5px;top:432px;color:#111">Kinta</div>
<div class="row" style="left:101.5px;top:432px;color:#111">Hulu Kinta</div>
<!-- touch indicator -->
<div class="abs" style="left:116px;top:521px;width:28px;height:28px;border-radius:50%;background:#b3b1bb;border:4.1px solid #1b76ea"></div>
</div>
</body>
</html>
